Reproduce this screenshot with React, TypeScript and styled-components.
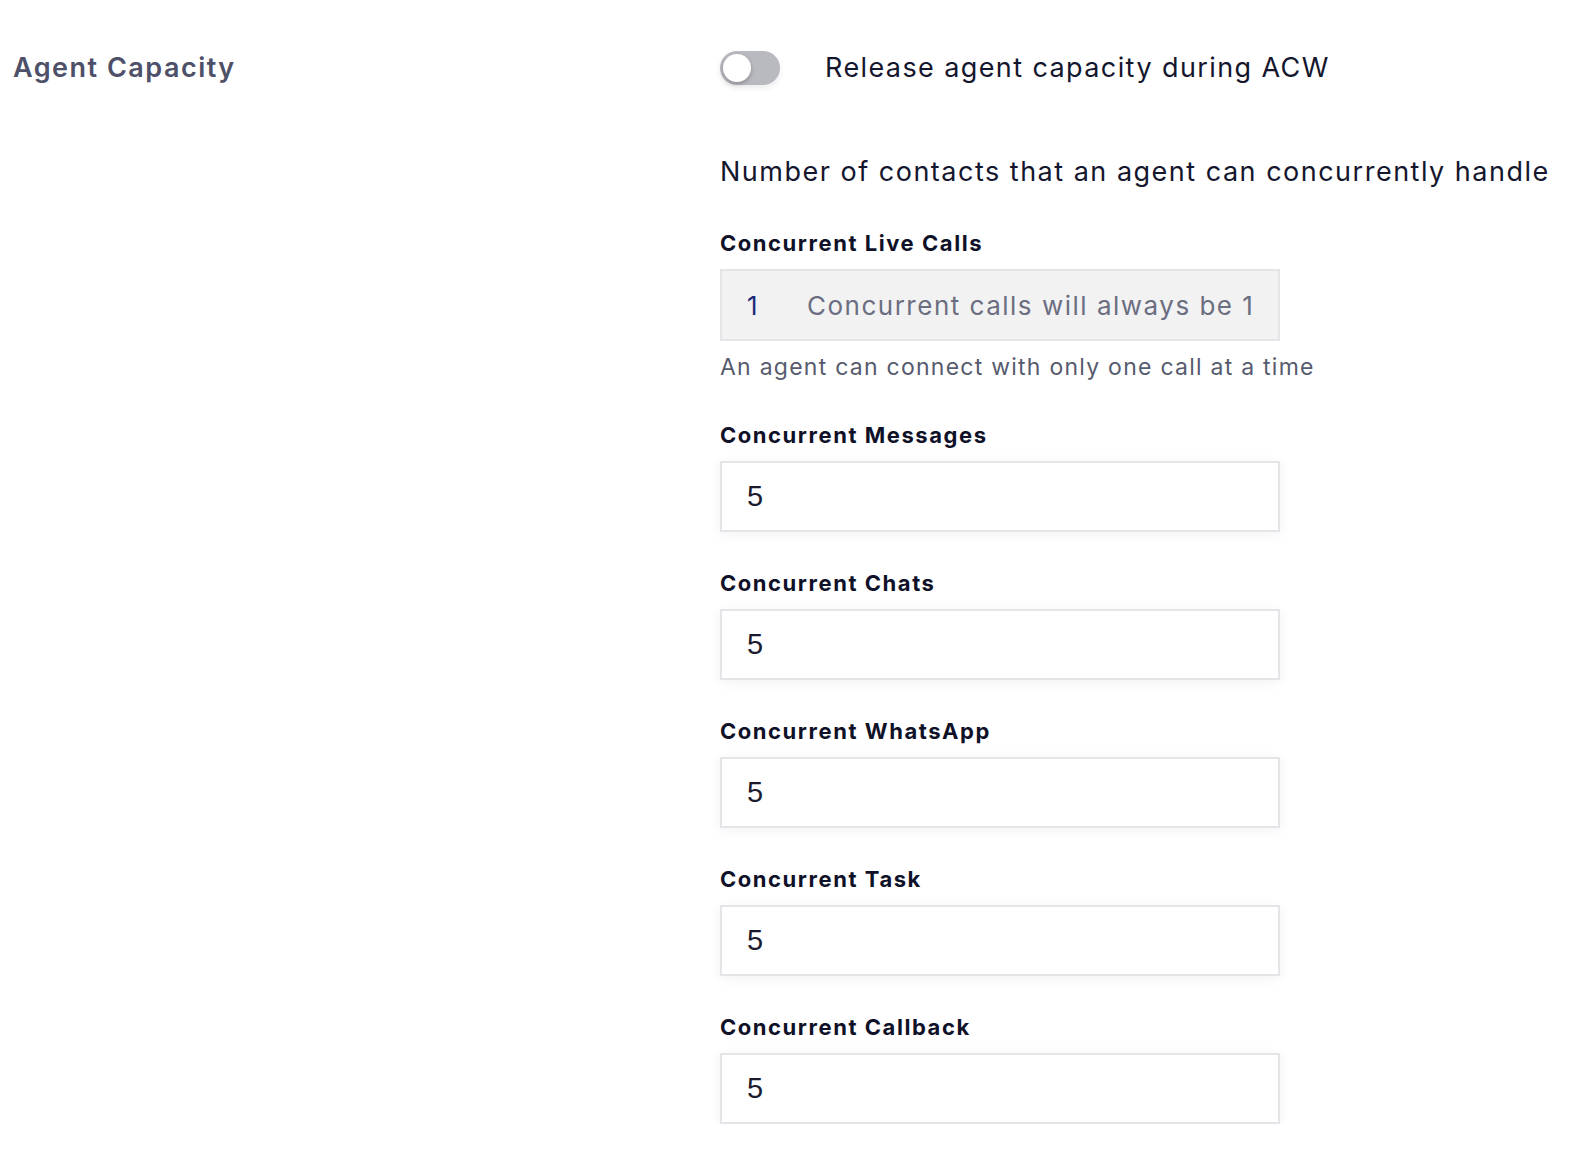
import React, {useState} from 'react';
import styled, {createGlobalStyle} from 'styled-components';

const GlobalStyle = createGlobalStyle`
  html, body {
    margin: 0;
    padding: 0;
    background: #fff;
  }
  body {
    font-family: Inter, "Open Sans", sans-serif;
    color: #14162e;
  }
`;

type Field = {
    label: string
    value: string
};

const fields: Field[] = [
    {label: 'Concurrent Messages', value: '5'},
    {label: 'Concurrent Chats', value: '5'},
    {label: 'Concurrent WhatsApp', value: '5'},
    {label: 'Concurrent Task', value: '5'},
    {label: 'Concurrent Callback', value: '5'},
];

export default function App() {

    const [release, setRelease] = useState<boolean>(false);

    return (
        <>
            <GlobalStyle/>
            <Section>
                <SectionTitle>Agent Capacity</SectionTitle>
                <Body>
                    <ToggleRow>
                        <Toggle type="button" on={release} onClick={() => setRelease(!release)}>
                            <Knob on={release}/>
                        </Toggle>
                        <ToggleText>Release agent capacity during ACW</ToggleText>
                    </ToggleRow>

                    <Description>Number of contacts that an agent can concurrently handle</Description>

                    <FieldGroup>
                        <Label>Concurrent Live Calls</Label>
                        <ReadOnlyBox>
                            <ReadOnlyValue>1</ReadOnlyValue>
                            <ReadOnlyNote>Concurrent calls will always be 1</ReadOnlyNote>
                        </ReadOnlyBox>
                        <Hint>An agent can connect with only one call at a time</Hint>
                    </FieldGroup>

                    {fields.map((f) => (
                        <FieldGroup key={f.label}>
                            <Label>{f.label}</Label>
                            <NumberInput type="text" defaultValue={f.value}/>
                        </FieldGroup>
                    ))}
                </Body>
            </Section>
        </>
    );

}

const Section = styled.div`
  display: grid;
  grid-template-columns: 707px 1fr;
  padding: 50px 0 0 13px;
`;

const SectionTitle = styled.h2`
  margin: 0;
  height: 35px;
  display: flex;
  align-items: center;
  font-size: 27px;
  font-weight: 600;
  letter-spacing: 1.5px;
  color: #4d5068;
`;

const Body = styled.div`
  display: flex;
  flex-direction: column;
`;

const ToggleRow = styled.div`
  display: flex;
  align-items: center;
  gap: 45px;
  height: 35px;
`;

const Toggle = styled.button<{ on: boolean }>`
  position: relative;
  width: 60px;
  height: 34px;
  padding: 0;
  border: none;
  border-radius: 17px;
  cursor: pointer;
  background: ${(p) => (p.on ? '#2b3a8c' : '#b9bac0')};
  box-shadow: 0 3px 6px rgba(0, 0, 0, 0.08);
`;

const Knob = styled.span<{ on: boolean }>`
  position: absolute;
  top: 3px;
  left: ${(p) => (p.on ? '29px' : '3px')};
  width: 28px;
  height: 28px;
  border-radius: 50%;
  background: #fff;
  box-shadow: 0 2px 4px rgba(0, 0, 0, 0.25);
`;

const ToggleText = styled.span`
  font-size: 27px;
  font-weight: 400;
  letter-spacing: 1.4px;
  color: #14162e;
`;

const Description = styled.p`
  margin: 67px 0 0;
  line-height: 40px;
  font-size: 27px;
  letter-spacing: 1.5px;
  white-space: nowrap;
  color: #14162e;
`;

const FieldGroup = styled.div`
  display: flex;
  flex-direction: column;
  margin-top: 36px;
  width: 560px;
`;

const Label = styled.label`
  line-height: 30px;
  margin-bottom: 11px;
  font-size: 22px;
  font-weight: 700;
  letter-spacing: 1.55px;
  color: #0f1128;
  white-space: nowrap;
`;

const ReadOnlyBox = styled.div`
  box-sizing: border-box;
  display: flex;
  align-items: center;
  height: 72px;
  padding-left: 25px;
  border: 2px solid #e4e5e9;
  background: #f2f2f3;
`;

const ReadOnlyValue = styled.span`
  width: 60px;
  font-size: 26px;
  color: #1d2a7a;
`;

const ReadOnlyNote = styled.span`
  font-size: 26px;
  color: #6b6e80;
  letter-spacing: 1.5px;
  white-space: nowrap;
`;

const Hint = styled.span`
  margin-top: 11px;
  margin-bottom: 2px;
  line-height: 30px;
  font-size: 23px;
  letter-spacing: 1.25px;
  white-space: nowrap;
  color: #575b6e;
`;

const NumberInput = styled.input`
  box-sizing: border-box;
  width: 560px;
  height: 71px;
  padding: 0 0 0 25px;
  border: 2px solid #e4e5e9;
  background: #fff;
  box-shadow: 0 2px 12px rgba(0, 0, 0, 0.06);
  font-family: "Liberation Sans", Arial, sans-serif;
  font-size: 29px;
  color: #1a1b2e;
  outline: none;
`;
